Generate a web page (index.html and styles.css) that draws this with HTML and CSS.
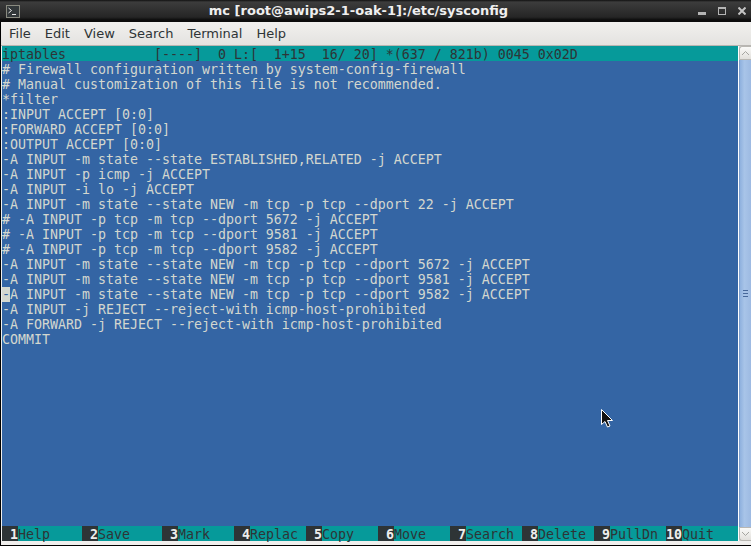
FILE: index.html
```html
<!DOCTYPE html>
<html lang="en">
<head>
<meta charset="utf-8">
<title>mc</title>
<link rel="stylesheet" href="styles.css">
</head>
<body>
<div class="window">
  <header class="titlebar">
    <svg class="app-icon" width="14" height="13" viewBox="0 0 14 13"><rect width="14" height="13" fill="#8a8b80"/><rect x="1" y="1" width="12" height="11" fill="#33383a"/><path d="M2.500 3l3 2.500-3 2.500M6 9.500h4" fill="none" stroke="#e8e8e8"/></svg>
    <span class="title">mc [root@awips2-1-oak-1]:/etc/sysconfig</span>
    <div class="controls">
      <svg width="8" height="8" viewBox="0 0 8 8"><rect y="5" width="8" height="3" fill="#b4b4b4"/></svg>
      <svg width="8" height="8" viewBox="0 0 8 8"><rect x="0.500" y="0.500" width="7" height="7" fill="none" stroke="#b4b4b4"/><rect width="8" height="2" fill="#b4b4b4"/></svg>
      <svg width="8" height="8" viewBox="0 0 8 8"><path d="M0.500 0.500l7 7M7.500 0.500l-7 7" stroke="#c4c4c4" stroke-width="2"/></svg>
    </div>
  </header>
  <nav class="menubar">
    <span>File</span><span>Edit</span><span>View</span><span>Search</span><span>Terminal</span><span>Help</span>
  </nav>
  <div class="client">
    <main class="terminal">
      <div class="status">iptables           [----]  0 L:[  1+15  16/ 20] *(637 / 821b) 0045 0x02D</div>
      <pre class="editor"># Firewall configuration written by system-config-firewall
# Manual customization of this file is not recommended.
*filter
:INPUT ACCEPT [0:0]
:FORWARD ACCEPT [0:0]
:OUTPUT ACCEPT [0:0]
-A INPUT -m state --state ESTABLISHED,RELATED -j ACCEPT
-A INPUT -p icmp -j ACCEPT
-A INPUT -i lo -j ACCEPT
-A INPUT -m state --state NEW -m tcp -p tcp --dport 22 -j ACCEPT
# -A INPUT -p tcp -m tcp --dport 5672 -j ACCEPT
# -A INPUT -p tcp -m tcp --dport 9581 -j ACCEPT
# -A INPUT -p tcp -m tcp --dport 9582 -j ACCEPT
-A INPUT -m state --state NEW -m tcp -p tcp --dport 5672 -j ACCEPT
-A INPUT -m state --state NEW -m tcp -p tcp --dport 9581 -j ACCEPT
<span class="cursor">-</span>A INPUT -m state --state NEW -m tcp -p tcp --dport 9582 -j ACCEPT
-A INPUT -j REJECT --reject-with icmp-host-prohibited
-A FORWARD -j REJECT --reject-with icmp-host-prohibited
COMMIT</pre>
      <footer class="fkeys">
        <b>1</b><span class="w8">Help</span><b>2</b><span class="w8">Save</span><b>3</b><span class="w7">Mark</span><b>4</b><span class="w7">Replac</span><b>5</b><span class="w7">Copy</span><b>6</b><span class="w7">Move</span><b>7</b><span class="w7">Search</span><b>8</b><span class="w7">Delete</span><b>9</b><span class="w7">PullDn</span><b>10</b><span class="last">Quit</span>
      </footer>
    </main>
    <aside class="scrollbar">
      <div class="arrow up"><svg width="9" height="6" viewBox="0 0 9 6"><path d="M1 5l3.500-3.500L8 5" fill="none" stroke="#a5a5a0"/></svg></div>
      <div class="thumb"><i></i><i></i><i></i></div>
      <div class="arrow down"><svg width="9" height="6" viewBox="0 0 9 6"><path d="M1 1l3.500 3.500L8 1" fill="none" stroke="#a5a5a0"/></svg></div>
    </aside>
  </div>
</div>
<svg class="pointer" width="13" height="19" viewBox="0 0 13 19"><path d="M0.500 0.500v15l3.500-3 2.500 5.500 2.500-1-2.500-5.500h5z" fill="#111" stroke="#fff" stroke-width="1"/></svg>
</body>
</html>
```
FILE: styles.css
```css
html, body {
  margin: 0;
  padding: 0;
  width: 751px;
  height: 546px;
  overflow: hidden;
  background: #000;
}
.window {
  width: 751px;
  height: 546px;
  box-sizing: border-box;
  padding-bottom: 1px;
  display: flex;
  flex-direction: column;
  font-family: "DejaVu Sans", sans-serif;
}
.titlebar {
  height: 22px;
  flex: none;
  box-sizing: border-box;
  padding: 0 34px 2px 0;
  display: flex;
  align-items: center;
  justify-content: center;
  background: linear-gradient(#111 0, #3c3c3c 2px, #262626 17px, #0c0c0c 20px, #0c0c0c 22px);
  position: relative;
}
.app-icon {
  position: absolute;
  left: 6px;
  top: 5px;
}
.title {
  color: #efefef;
  font-size: 13px;
  font-weight: bold;
}
.controls {
  position: absolute;
  left: 698px;
  top: 7px;
  display: flex;
  gap: 12px;
}
.menubar {
  height: 23px;
  flex: none;
  margin-left: 1px;
  display: flex;
  align-items: center;
  gap: 14px;
  padding-left: 8px;
  background: linear-gradient(#f1f0ee, #e4e3e0);
  border-bottom: 1px solid #b8b6b2;
  color: #2e3436;
  font-size: 13px;
}
.client {
  flex: 1;
  min-height: 0;
  margin-left: 1px;
  display: flex;
  padding: 0 0 4px 1px;
  background: #f0efed;
}
.terminal {
  min-width: 0;
  flex: 1;
  display: flex;
  flex-direction: column;
  background: #3465a4;
  font-family: "DejaVu Sans Mono", monospace;
  font-size: 13.29px;
  line-height: 15px;
}
.status {
  height: 14px;
  padding-top: 1px;
  flex: none;
  background: #069a9a;
  color: #2e3436;
  white-space: pre;
}
.editor {
  flex: 1;
  margin: 0;
  padding-top: 1px;
  font: inherit;
  color: #d3d7cf;
}
.cursor {
  background: #d3d7cf;
  color: #3465a4;
}
.fkeys {
  height: 15px;
  flex: none;
  display: flex;
  background: #069a9a;
  color: #2e3436;
}
.fkeys b {
  font-weight: bold;
  background: #2e3436;
  color: #eeeeec;
  text-align: right;
  min-width: 16px;
  padding-top: 1px;
  height: 14px;
}
.fkeys span {
  display: block;
  padding-top: 1px;
}
.w8 { width: 64px; }
.w7 { width: 56px; }
.last { flex: 1; }
.scrollbar {
  width: 12px;
  flex: none;
  border-left: 1px solid #fff;
  display: flex;
  flex-direction: column;
  background: #dcdad6;
}
.arrow {
  height: 14px;
  flex: none;
  display: flex;
  align-items: center;
  justify-content: center;
  background: linear-gradient(#fafaf8, #e2e0dc);
  border: 1px solid #b9b7b2;
  border-right: 0;
  box-sizing: border-box;
}
.arrow.up { border-top-left-radius: 3px; }
.arrow.down { border-bottom-left-radius: 3px; }
.thumb {
  flex: 1;
  display: flex;
  flex-direction: column;
  align-items: center;
  justify-content: center;
  gap: 2px;
  padding-bottom: 1px;
  background: linear-gradient(90deg, #8fb1de, #a8c4e8 40%, #9dbae2);
  border-left: 1px solid #7e9fcc;
}
.thumb i {
  display: block;
  width: 5px;
  height: 1px;
  background: #46679a;
}
.pointer {
  position: absolute;
  left: 601px;
  top: 409px;
}
```
